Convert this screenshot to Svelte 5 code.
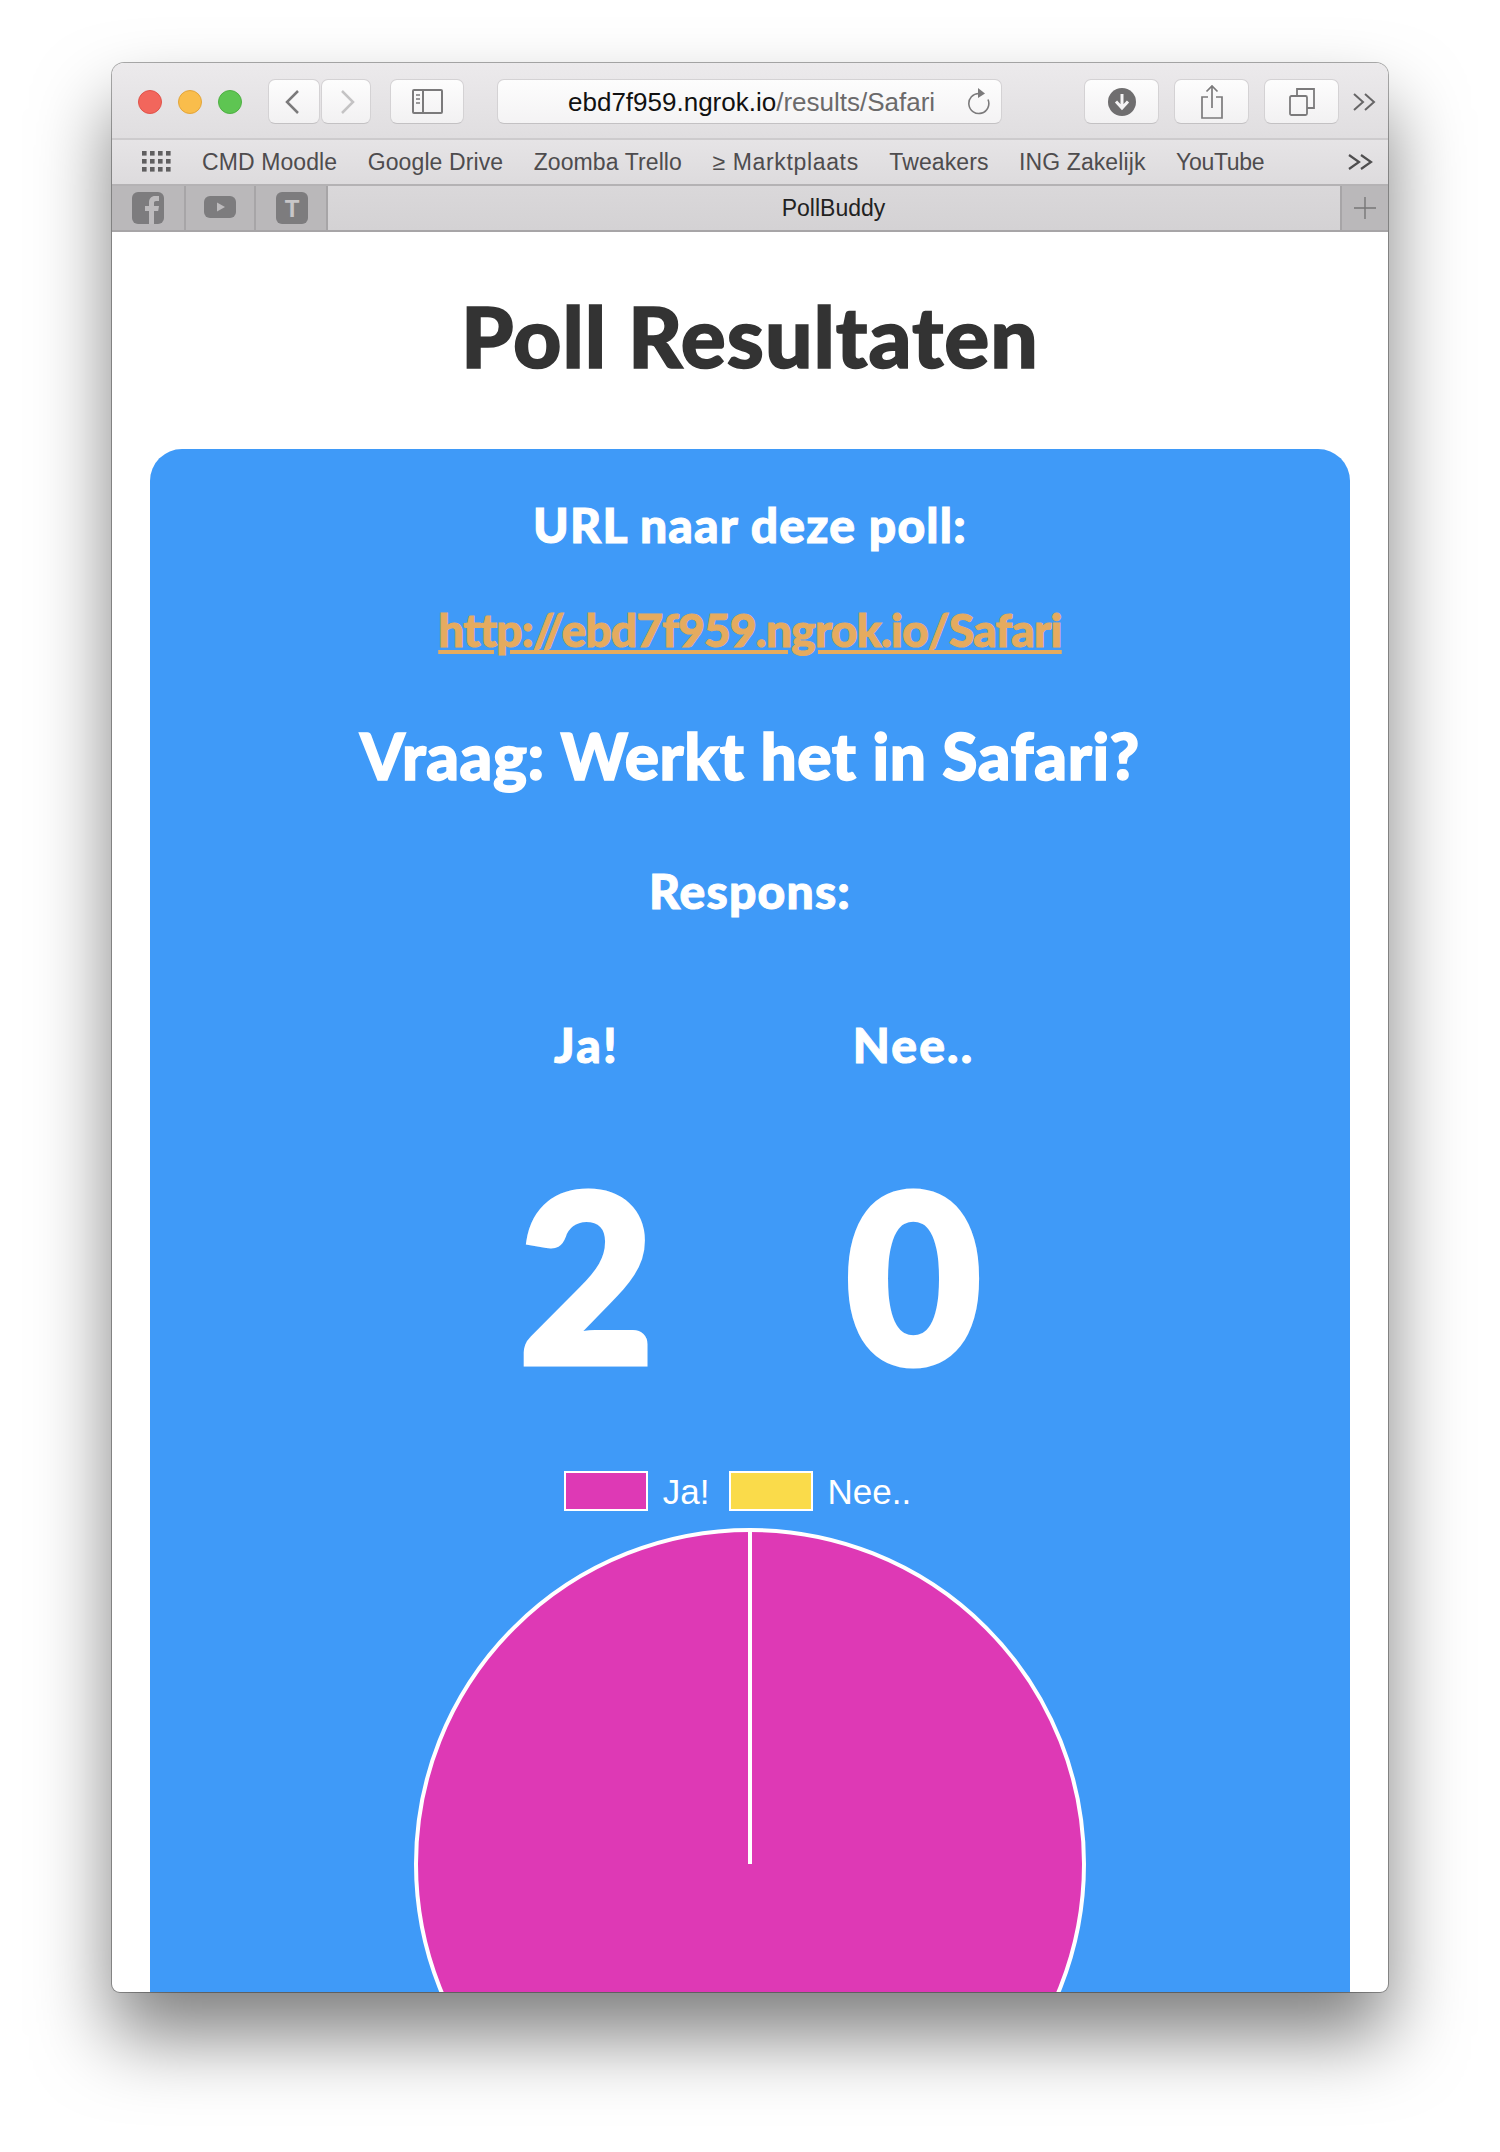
<script lang="ts">
  const bookmarks = ['CMD Moodle', 'Google Drive', 'Zoomba Trello', '≥ Marktplaats', 'Tweakers', 'ING Zakelijk', 'YouTube'];
  const responses = [
    { label: 'Ja!', count: 2, color: '#de39b5' },
    { label: 'Nee..', count: 0, color: '#fadb4a' }
  ];
</script>

<div class="page">
  <div class="window">
    <div class="toolbar">
      <div class="lights">
        <span class="light red"></span>
        <span class="light yellow"></span>
        <span class="light green"></span>
      </div>
      <button class="btn back" aria-label="Terug">
        <svg width="18" height="26" viewBox="0 0 18 26"><path d="M15 2 4 13l11 11" fill="none" stroke="#7b7a7b" stroke-width="2.500"/></svg>
      </button>
      <button class="btn forward" aria-label="Vooruit">
        <svg width="18" height="26" viewBox="0 0 18 26"><path d="M3 2l11 11L3 24" fill="none" stroke="#c4c3c4" stroke-width="2.500"/></svg>
      </button>
      <button class="btn sidebar" aria-label="Zijbalk">
        <svg width="31" height="25" viewBox="0 0 31 25">
          <rect x="1" y="1" width="29" height="23" rx="1" fill="none" stroke="#7b7a7b" stroke-width="2"/>
          <path d="M11 1v23" stroke="#7b7a7b" stroke-width="2"/>
          <path d="M4 6h4M4 10h4M4 14h4" stroke="#9a999a" stroke-width="2"/>
        </svg>
      </button>
      <div class="url">
        <span class="url-text"><b>ebd7f959.ngrok.io</b>/results/Safari</span>
        <svg class="reload" width="26" height="30" viewBox="0 0 26 30">
          <path d="M15 6.500a10 10 0 1 0 9 6" fill="none" stroke="#7b7a7b" stroke-width="1.600"/>
          <path d="M14 1l7 5.500-7 4.500z" fill="#7b7a7b"/>
        </svg>
      </div>
      <button class="btn action download" aria-label="Downloads">
        <svg width="28" height="28" viewBox="0 0 28 28">
          <circle cx="14" cy="14" r="14" fill="#6f6e6f"/>
          <path d="M14 6v13M8 13.500l6 6.500 6-6.500" fill="none" stroke="#f4f3f4" stroke-width="3"/>
        </svg>
      </button>
      <button class="btn action share" aria-label="Delen">
        <svg width="24" height="36" viewBox="0 0 24 36">
          <path d="M8 13H2v21h20V13h-6" fill="none" stroke="#7b7a7b" stroke-width="1.700"/>
          <path d="M12 24V2M6.500 7.500 12 2l5.500 5.500" fill="none" stroke="#7b7a7b" stroke-width="1.700"/>
        </svg>
      </button>
      <button class="btn action tabs" aria-label="Tabbladen">
        <svg width="26" height="28" viewBox="0 0 26 28">
          <rect x="1" y="8" width="17" height="19" rx="1.500" fill="none" stroke="#7b7a7b" stroke-width="1.800"/>
          <path d="M8 8V1h17v19h-7" fill="none" stroke="#7b7a7b" stroke-width="1.800"/>
        </svg>
      </button>
      <svg class="more" width="24" height="20" viewBox="0 0 24 20"><path d="M2 2l9 8-9 8M13 2l9 8-9 8" fill="none" stroke="#676667" stroke-width="2"/></svg>
    </div>

    <div class="bookmarks">
      <svg class="grid-icon" width="30" height="22" viewBox="0 0 30 22" fill="#5f5e5f">
        {#each [0, 1, 2] as r}
          {#each [0, 1, 2, 3] as c}
            <rect x={c * 8} y={r * 8} width="4.600" height="4.600" />
          {/each}
        {/each}
      </svg>
      <div class="marks">
        {#each bookmarks as b}
          <span class:wide={b.startsWith('≥')} class:tight={b === 'YouTube'}>{b}</span>
        {/each}
      </div>
      <svg class="more" width="26" height="18" viewBox="0 0 26 18"><path d="M2 2l10 7-10 7M14 2l10 7-10 7" fill="none" stroke="#4f4e4f" stroke-width="2.200"/></svg>
    </div>

    <div class="tabbar">
      <div class="pin first">
        <svg width="32" height="32" viewBox="0 0 32 32">
          <rect width="32" height="32" rx="6" fill="#7d7c7e"/>
          <path d="M17 32V19h-4v-5h4v-3.500C17 6.500 19.500 4 23 4h4v5h-3c-1.300 0-2 .7-2 2v3h5l-.8 5H22v13z" fill="#bdbbbd"/>
        </svg>
      </div>
      <div class="pin second">
        <svg width="32" height="24" viewBox="0 0 32 24">
          <rect width="32" height="22" rx="6" fill="#7d7c7e"/>
          <path d="M13 6.500v9l8-4.500z" fill="#bdbbbd"/>
        </svg>
      </div>
      <div class="pin third">
        <svg width="32" height="32" viewBox="0 0 32 32">
          <rect width="32" height="32" rx="6" fill="#7d7c7e"/>
          <text x="16" y="25" text-anchor="middle" font-family="Liberation Sans" font-weight="700" font-size="24" fill="#c8c6c8">T</text>
        </svg>
      </div>
      <div class="tab-title">PollBuddy</div>
      <div class="new-tab">
        <svg width="22" height="22" viewBox="0 0 22 22"><path d="M11 0v22M0 11h22" stroke="#777677" stroke-width="1.400"/></svg>
      </div>
    </div>

    <div class="content">
      <h1>Poll Resultaten</h1>
      <section class="card">
        <h3>URL naar deze poll:</h3>
        <a class="link" href="http://ebd7f959.ngrok.io/Safari">http://ebd7f959.ngrok.io/Safari</a>
        <h2>Vraag: Werkt het in Safari?</h2>
        <h3 class="respons">Respons:</h3>
        <div class="counts">
          {#each responses as r}
            <div class="col">
              <h3>{r.label}</h3>
              <div class="num">{r.count}</div>
            </div>
          {/each}
        </div>
        <div class="legend">
          {#each responses as r}
            <span class="swatch" style="background: {r.color}"></span>
            <span class="legend-label">{r.label}</span>
          {/each}
        </div>
        <svg class="pie" width="672" height="672" viewBox="0 0 672 672">
          <circle cx="336" cy="336" r="334" fill="#de39b5" stroke="#fff" stroke-width="4"/>
          <path d="M336 2v334" stroke="#fff" stroke-width="4"/>
        </svg>
      </section>
    </div>
  </div>
</div>

<style>
  :global(body) {
    margin: 0;
    background: #fff;
  }
  .page {
    height: 2152px;
    padding: 63px 112px 0 112px;
    box-sizing: border-box;
    overflow: hidden;
    font-family: 'Liberation Sans', Arial, sans-serif;
  }
  .window {
    height: 1929px;
    overflow: hidden;
    border-radius: 12px 12px 8px 8px;
    box-shadow:
      0 0 0 1px rgba(0, 0, 0, 0.32),
      0 44px 76px rgba(0, 0, 0, 0.5);
    display: flex;
    flex-direction: column;
    background: #fff;
  }

  .toolbar {
    flex: none;
    display: flex;
    align-items: center;
    padding: 2px 0 0 26px;
    background: linear-gradient(#eceaec, #e0dee0);
    border-bottom: 2px solid #cdcbcd;
    box-sizing: border-box;
    height: 77px;
  }
  .lights {
    display: flex;
    gap: 16px;
    margin-right: 26px;
  }
  .light {
    width: 24px;
    height: 24px;
    border-radius: 50%;
    box-sizing: border-box;
  }
  .red {
    background: #f2665c;
    border: 1px solid #e0534a;
  }
  .yellow {
    background: #f9bd4b;
    border: 1px solid #e3a53a;
  }
  .green {
    background: #5ec552;
    border: 1px solid #4fb043;
  }
  .btn {
    height: 45px;
    padding: 0;
    box-sizing: border-box;
    display: flex;
    align-items: center;
    justify-content: center;
    background: linear-gradient(#fdfdfd, #f2f1f2);
    border: 1px solid #d4d2d4;
    border-bottom-color: #c3c1c3;
    border-radius: 7px;
  }
  .back {
    width: 52px;
    padding-right: 5px;
  }
  .forward {
    width: 50px;
    margin-left: 1px;
    padding-left: 3px;
  }
  .sidebar {
    width: 74px;
    margin-left: 19px;
  }
  .url {
    width: 505px;
    height: 45px;
    margin-left: 33px;
    box-sizing: border-box;
    display: flex;
    align-items: center;
    background: linear-gradient(#fdfdfd, #f4f3f4);
    border: 1px solid #d4d2d4;
    border-bottom-color: #c3c1c3;
    border-radius: 7px;
  }
  .url-text {
    margin: 2px 0 0 70px;
    font-size: 26px;
    color: #6b6a6b;
    white-space: nowrap;
  }
  .url-text b {
    font-weight: 400;
    color: #111;
  }
  .reload {
    margin-left: auto;
    margin-right: 11px;
  }
  .action {
    width: 75px;
  }
  .download {
    margin-left: 82px;
  }
  .share {
    margin-left: 15px;
  }
  .tabs {
    margin-left: 15px;
  }
  .toolbar .more {
    margin-left: 13px;
  }

  .bookmarks {
    height: 46px;
    flex: none;
    display: flex;
    align-items: center;
    padding-left: 30px;
    box-sizing: border-box;
    background: linear-gradient(#e6e4e6, #dddbdd);
    border-bottom: 2px solid #b4b2b4;
    color: #4e4c4e;
    font-size: 23px;
  }
  .marks {
    display: flex;
    gap: 30.500px;
    margin-left: 30px;
    white-space: nowrap;
    letter-spacing: 0.100px;
  }
  .marks .wide {
    letter-spacing: 0.650px;
  }
  .marks .tight {
    letter-spacing: -0.300px;
  }
  .bookmarks .more {
    margin-left: auto;
    margin-right: 15px;
  }

  .tabbar {
    height: 46px;
    flex: none;
    display: flex;
    box-sizing: border-box;
    background: linear-gradient(#dad8da, #d4d2d4);
    border-bottom: 2px solid #a7a5a7;
    font-size: 23px;
    color: #222;
  }
  .pin {
    display: flex;
    align-items: center;
    justify-content: center;
    box-sizing: border-box;
    background: #bab8ba;
    border-right: 2px solid #a7a5a7;
  }
  .first {
    width: 74px;
    padding-right: 1px;
  }
  .second {
    width: 70px;
  }
  .third {
    width: 72px;
    padding-left: 2px;
  }
  .tab-title {
    flex: 1;
    text-align: center;
    line-height: 44px;
    padding-right: 1px;
  }
  .new-tab {
    width: 48px;
    display: flex;
    align-items: center;
    justify-content: center;
    background: #bab8ba;
    border-left: 2px solid #a7a5a7;
    box-sizing: border-box;
  }

  .content {
    padding: 0 38px;
    flex: 1;
    min-height: 0;
  }
  h1 {
    margin: 0;
    padding-top: 56px;
    height: 217px;
    box-sizing: border-box;
    text-align: center;
    font-family: Lato, sans-serif;
    font-weight: 900;
    font-size: 84px;
    line-height: 96px;
    letter-spacing: 1px;
    -webkit-text-stroke: 1.500px #333;
    color: #333;
  }
  .card {
    background: #3f9af8;
    border-radius: 32px;
    display: flex;
    flex-direction: column;
    align-items: center;
    padding-top: 49px;
    color: #fff;
    font-family: Lato, sans-serif;
    font-weight: 900;
  }
  h3 {
    margin: 0;
    font-size: 48px;
    line-height: 54px;
    font-weight: 900;
    letter-spacing: 1.200px;
    -webkit-text-stroke: 1px #fff;
  }
  .col h3 {
    letter-spacing: 2.200px;
  }
  .link {
    margin-top: 51px;
    font-size: 46px;
    line-height: 54px;
    letter-spacing: -0.800px;
    -webkit-text-stroke: 1px #e5ab5f;
    color: #e5ab5f;
    text-decoration: underline;
  }
  h2 {
    margin: 61px 0 0;
    font-size: 64px;
    line-height: 76px;
    font-weight: 900;
    letter-spacing: 0.600px;
    -webkit-text-stroke: 1.500px #fff;
  }
  .respons {
    margin-top: 70px;
  }
  .counts {
    display: grid;
    grid-template-columns: 327px 327px;
    margin-top: 100px;
    text-align: center;
  }
  .num {
    margin-top: 57px;
    font-size: 232px;
    line-height: 288px;
    -webkit-text-stroke: 7px #fff;
  }
  .legend {
    display: flex;
    align-items: center;
    margin-top: 53px;
    margin-right: 6px;
    font-family: 'Liberation Sans', Arial, sans-serif;
    font-weight: 400;
    font-size: 35px;
  }
  .swatch {
    width: 84px;
    height: 40px;
    box-sizing: border-box;
    border: 2px solid #fff;
  }
  .legend-label {
    margin: 2px 19px 0 15px;
    line-height: 40px;
  }
  .pie {
    display: block;
    flex: none;
    margin-top: 16px;
  }
</style>
